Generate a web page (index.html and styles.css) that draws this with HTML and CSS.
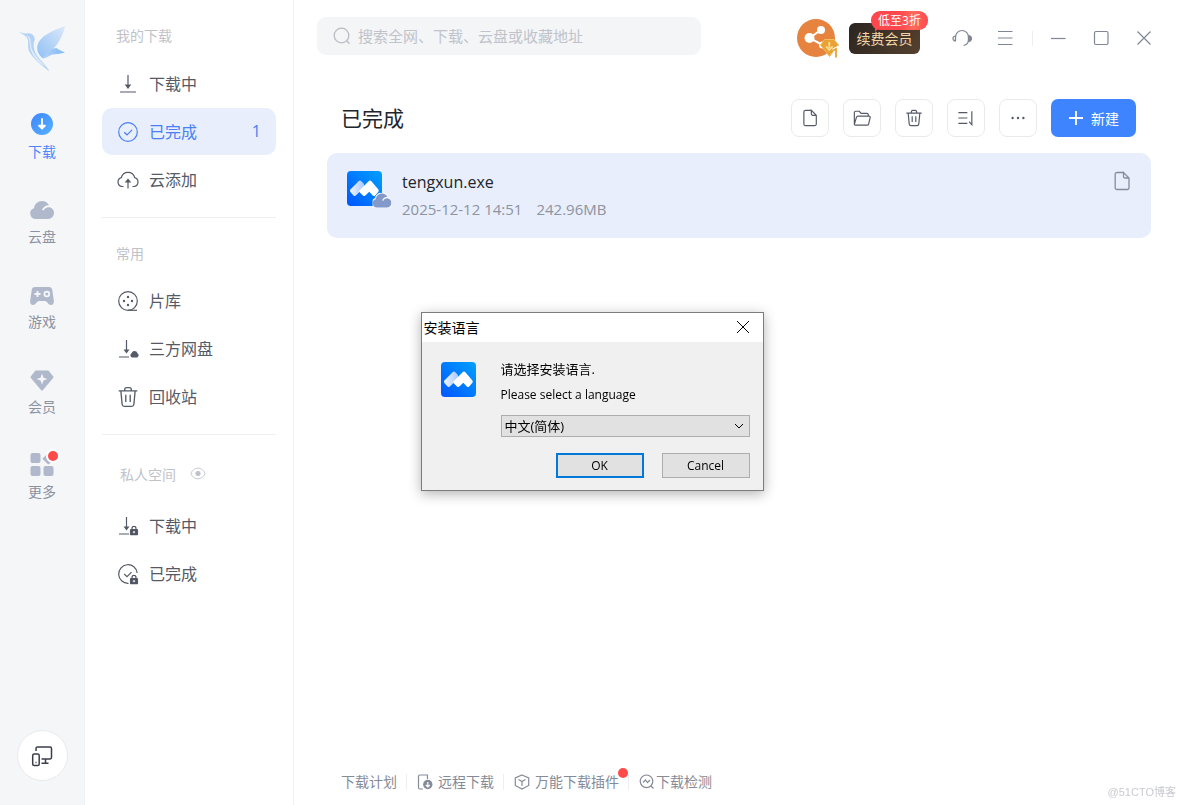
FILE: index.html
```html
<!DOCTYPE html>
<html lang="zh-CN">
<head>
    <meta charset="UTF-8">
    <meta name="viewport" content="width=device-width, initial-scale=1.0">
    <title>已完成</title>
    <link rel="stylesheet" href="styles.css">
</head>
<body>
    <!-- shared icons -->
    <svg class="sprite" aria-hidden="true">
        <defs>
            <linearGradient id="g-app" x1="0" y1="1" x2="1" y2="0">
                <stop offset="0" stop-color="#0056ff"/>
                <stop offset="1" stop-color="#00a0ff"/>
            </linearGradient>
            <linearGradient id="g-peak" x1="0" y1="0" x2="1" y2="0">
                <stop offset="0" stop-color="#f0f5ff"/>
                <stop offset="1" stop-color="#a9c9ff"/>
            </linearGradient>
        </defs>
        <symbol id="i-app" viewBox="0 0 35 35">
            <rect width="35" height="35" rx="4" fill="url(#g-app)"/>
            <path d="M3.4 18.6 11.6 10.2Q13 9 14.3 10.2L17 13V16.500L8.900 24.6Q7.6 25.6 6.5 24.4L3.4 21Q2.6 19.8 3.4 18.6z" fill="url(#g-peak)"/>
            <path d="M12.6 19.2 21.6 10.2Q23 9 24.4 10.2L31.4 18.4Q32.2 19.6 31.4 20.8L28.2 24.4Q27 25.4 25.8 24.4L22.3 20.8 18.4 24.6Q17.2 25.5 16 24.4L12.6 21.2Q11.8 20.2 12.6 19.2z" fill="#fff"/>
        </symbol>
        <symbol id="i-cloud" viewBox="0 0 24 20">
            <path d="M6 19A5.5 5.5 0 0 1 4 8.300C4.500 4 8 1 12 1c3 0 5.500 1.600 7 4.200-3-.3-5.700 1.600-7 4.600l1.500.8c1.200-2.400 3.400-3.700 6-3.300 2.600.5 4.500 2.800 4.500 5.600A6 6 0 0 1 18 19z"/>
        </symbol>
        <symbol id="i-doc" viewBox="0 0 20 20">
            <path d="M11.500 1.500H5A1.800 1.800 0 0 0 3.200 3.300v13.400A1.800 1.800 0 0 0 5 18.500h10.200a1.800 1.800 0 0 0 1.800-1.800V7L11.500 1.500V5.500A1.500 1.500 0 0 0 13 7h4"/>
        </symbol>
        <symbol id="i-trash" viewBox="0 0 20 20">
            <path d="M1.500 4.500h17M3.500 4.500l1.200 12.300a2 2 0 0 0 2 1.700h6.600a2 2 0 0 0 2-1.700l1.200-12.300M7 4.500V3.300A1.800 1.800 0 0 1 8.800 1.500h2.400A1.800 1.800 0 0 1 13 3.300v1.200M8 8v6.500M12 8v6.500"/>
        </symbol>
        <symbol id="i-check" viewBox="0 0 22 22">
            <circle cx="11" cy="11" r="9.300"/>
            <path d="M7.200 11.200l2.800 2.600 5-5"/>
        </symbol>
        <symbol id="i-lock" viewBox="0 0 10 11">
            <path d="M2.800 5V3.200a2.200 2.200 0 0 1 4.400 0V5" fill="none" stroke="#4d5260" stroke-width="1.300"/>
            <rect x="1" y="4.300" width="8" height="6.200" rx=".8" fill="#4d5260"/>
            <path d="M5 6v2.600M3.700 7.300h2.600" stroke="#fff" stroke-width="1"/>
        </symbol>
    </svg>

    <div class="app">
        <nav class="rail">
            <svg class="logo" viewBox="0 0 48 48" aria-hidden="true">
                <defs>
                    <linearGradient id="g-wing" x1="0" y1="1" x2="1" y2="0">
                        <stop offset="0" stop-color="#8fc0f5"/>
                        <stop offset="1" stop-color="#dde8f9"/>
                    </linearGradient>
                    <linearGradient id="g-tail" x1="0" y1="0" x2="1" y2="0">
                        <stop offset="0" stop-color="#b4d3f7"/>
                        <stop offset="1" stop-color="#7db8f5"/>
                    </linearGradient>
                </defs>
                <path d="M47 2C34 7 22 12 19.500 21c-1 5 .5 9.500 5.500 13.500C31 29 43 21 47 2z" fill="url(#g-wing)"/>
                <path d="M25 34.500C29 27 35 24 38.500 24c2 1.500 5 3 8.500 4.500-5 1.300-7 1.600-10.500 1.700C33 30 29 34 25 34.500z" fill="url(#g-tail)"/>
                <path d="M1 8c4 1 6 1.500 8 1.500 4-.8 7.500 1.500 7.800 6-2.500 7 .5 14 5.700 20.500 3.500 3.500 6.500 7 9 11.500C25 42 15.500 36 11 27c-1.500-4-.5-8-1-11-.7-3-4-5.500-9-8z" fill="#b3d2f6"/>
                <path d="M8 11c4 1 5 5 5 10 1 8 7 14 15 22-9-5-14-12-15.500-18C11.500 19 12 14 8 11z" fill="#e1edfc"/>
                <path d="M16.500 18c-1 7 2 13 7 18" fill="none" stroke="#edf4fe" stroke-width="1.500"/>
            </svg>

            <a class="rail-item active" href="#">
                <svg viewBox="0 0 24 24">
                    <defs>
                        <linearGradient id="g-dl" x1="0" y1="0" x2="1" y2="1">
                            <stop offset="0" stop-color="#3f85ff"/>
                            <stop offset="1" stop-color="#55b2ff"/>
                        </linearGradient>
                    </defs>
                    <circle cx="12" cy="12" r="11" fill="url(#g-dl)"/>
                    <path d="M12 7v9M9 13.700l3 3 3-3z" fill="#fff" stroke="#fff" stroke-width="1.800" stroke-linecap="round" stroke-linejoin="round"/>
                </svg>
                <span>下载</span>
            </a>
            <a class="rail-item" href="#">
                <svg viewBox="0 -3 24 24"><use href="#i-cloud" width="24" height="20"/></svg>
                <span>云盘</span>
            </a>
            <a class="rail-item" href="#">
                <svg viewBox="0 -2 24 24">
                    <path d="M5 3h14c2 0 3 1 3.300 3l1.500 10.500c.4 3-1 4.500-2.800 4.500-3 0-3.500-4-6-4H9c-2.500 0-3 4-6 4-1.800 0-3.200-1.500-2.800-4.500L1.700 6C2 4 3 3 5 3z"/>
                    <path d="M7.500 7v6M4.500 10h6" stroke="#f5f6f8" stroke-width="1.800"/>
                    <circle cx="16.800" cy="10" r="2.400" fill="none" stroke="#f5f6f8" stroke-width="1.800"/>
                </svg>
                <span>游戏</span>
            </a>
            <a class="rail-item" href="#">
                <svg viewBox="0 -2 24 24">
                    <path d="M5.500 1.500h13L23.300 7.500q.4.700-.2 1.400L12.800 21.300q-.8.800-1.600 0L.9 8.900q-.6-.7-.2-1.400z"/>
                    <path d="M12 4.500l1.500 4.200 4 1.300-4 1.500L12 15.500l-1.500-4-4-1.500 4-1.300z" fill="#f5f6f8"/>
                </svg>
                <span>会员</span>
            </a>
            <a class="rail-item" href="#">
                <svg viewBox="0 0 24 24">
                    <rect x=".5" y="1" width="10" height="10" rx="2"/>
                    <rect x=".5" y="14" width="10" height="10" rx="2"/>
                    <rect x="13.500" y="14" width="10" height="10" rx="2"/>
                    <rect x="14.300" y="2.500" width="8.500" height="8.500" rx="1" transform="rotate(45 18.500 6.500)"/>
                </svg>
                <i class="dot rail-dot"></i>
                <span>更多</span>
            </a>

            <button class="device-btn" type="button" aria-label="设备">
                <svg viewBox="0 0 22 22">
                    <path d="M5 6V3.500A1.500 1.500 0 0 1 6.500 2H19a1.500 1.500 0 0 1 1.500 1.500v9A1.500 1.500 0 0 1 19 14h-8.500M14.500 14v4M10.500 18.300h7"/>
                    <rect x="1.700" y="9" width="6.500" height="11.500" rx="1.500"/>
                    <path d="M4.500 17.500h1"/>
                </svg>
            </button>
        </nav>

        <aside class="sidebar">
            <h2 class="group-title">我的下载</h2>
            <ul class="menu">
                <li><a class="menu-item" href="#">
                    <svg viewBox="0 0 22 22"><path d="M11 2v11M3 19h16"/><path class="solid" d="M7.700 11.500h6.600L11 16z"/></svg>
                    <span>下载中</span>
                </a></li>
                <li><a class="menu-item active" href="#">
                    <svg><use href="#i-check"/></svg>
                    <span>已完成</span>
                    <b class="count">1</b>
                </a></li>
                <li><a class="menu-item" href="#">
                    <svg viewBox="0 0 22 22"><path d="M6.500 17.500H5A4.500 4.500 0 0 1 4.300 8.700 6.900 6.900 0 0 1 17.700 8.700 4.500 4.500 0 0 1 17 17.500h-1.500M11 19.500v-7"/><path class="solid" d="M7.700 13.500 11 9.500l3.300 4z"/></svg>
                    <span>云添加</span>
                </a></li>
            </ul>

            <h2 class="group-title divided">常用</h2>
            <ul class="menu">
                <li><a class="menu-item" href="#">
                    <svg viewBox="0 0 22 22"><circle cx="11" cy="11" r="9.300"/><path d="M11 20.300h9"/><g class="solid"><circle cx="11" cy="7" r="1.200"/><circle cx="11" cy="15" r="1.200"/><circle cx="7" cy="11" r="1.200"/><circle cx="15" cy="11" r="1.200"/></g></svg>
                    <span>片库</span>
                </a></li>
                <li><a class="menu-item" href="#">
                    <svg viewBox="0 0 22 22"><path d="M9.500 2v10M2 19h10"/><path class="solid" d="M6.500 11.500h6L9.500 15.500z"/><path class="solid" d="M15 19.500a2.400 2.400 0 0 1-.5-4.300 3.200 3.200 0 0 1 6 0 2.400 2.400 0 0 1-.5 4.300z"/></svg>
                    <span>三方网盘</span>
                </a></li>
                <li><a class="menu-item" href="#">
                    <svg><use href="#i-trash"/></svg>
                    <span>回收站</span>
                </a></li>
            </ul>

            <h2 class="group-title divided private">
                <span>私人空间</span>
                <svg viewBox="0 0 18 14"><path d="M1 7c1.500-4 4.500-6 8-6s6.500 2 8 6c-1.500 4-4.500 6-8 6s-6.500-2-8-6z"/><circle cx="9" cy="7" r="2.500" fill="#bfc2c9"/></svg>
            </h2>
            <ul class="menu">
                <li><a class="menu-item" href="#">
                    <svg viewBox="0 0 22 22"><path d="M9.500 2v10M2 19h10"/><path class="solid" d="M6.500 11.500h6L9.500 15.500z"/><use href="#i-lock" x="12.500" y="10.500" width="9" height="10"/></svg>
                    <span>下载中</span>
                </a></li>
                <li><a class="menu-item" href="#">
                    <svg viewBox="0 0 22 22"><path d="M11.500 20.300A9.300 9.300 0 1 1 20.200 10M7.200 11l2.800 2.600 4.500-4.500"/><use href="#i-lock" x="12.500" y="11.500" width="9" height="10"/></svg>
                    <span>已完成</span>
                </a></li>
            </ul>
        </aside>

        <main class="main">
            <header class="topbar">
                <label class="search">
                    <svg viewBox="0 0 18 18"><circle cx="8.500" cy="8.500" r="7.300"/><path d="M13.800 13.800l2.700 3"/></svg>
                    <input type="text" aria-label="搜索" placeholder="搜索全网、下载、云盘或收藏地址">
                </label>

                <div class="top-actions">
                    <button class="avatar" type="button" aria-label="账号">
                        <svg viewBox="0 0 44 40">
                            <circle cx="19" cy="19" r="19" fill="#e5833f"/>
                            <path d="M24 11 12.500 19 25.500 26" fill="none" stroke="#fff" stroke-width="2"/>
                            <circle cx="24" cy="11" r="4" fill="#fff"/>
                            <circle cx="12.500" cy="19" r="5" fill="#fff"/>
                            <circle cx="25.500" cy="26" r="3.500" fill="#fff"/>
                            <path d="M27.500 20.500h9.500l4.500 5.500-9 11.500-9-11.500z" fill="#e9a235" stroke="#f3bd5c"/>
                            <path d="M32.300 23v6M29 27.500l3.300 3.500 3.300-3.500" fill="none" stroke="#fbdc94" stroke-width="1.800"/>
                            <path d="M36 31.500l3-1.500V38.500" fill="none" stroke="#fff" stroke-width="4"/>
                            <path d="M36 31.500l3-1.500V38.500" fill="none" stroke="#e9a235" stroke-width="1.800"/>
                        </svg>
                    </button>
                    <button class="vip" type="button">续费会员<span class="vip-tag">低至3折</span></button>
                    <button class="win-btn" type="button" aria-label="客服">
                        <svg viewBox="0 0 20 20"><path d="M3.500 12V9a6.500 6.500 0 0 1 13 0V12q0 4.500-5 5.500"/><path d="M3.500 8A2.500 2.500 0 0 0 3.500 13z"/><path d="M16.500 7.500A2.800 2.800 0 0 1 16.500 13.500z" fill="#7f8694"/></svg>
                    </button>
                    <button class="win-btn" type="button" aria-label="菜单">
                        <svg viewBox="0 0 20 20"><path d="M3 3.500h14.500M3 10h14.500M3 16.500h14.500"/></svg>
                    </button>
                    <span class="bar"></span>
                    <button class="win-btn" type="button" aria-label="最小化">
                        <svg viewBox="0 0 20 20"><path d="M3 10.500h14.500"/></svg>
                    </button>
                    <button class="win-btn" type="button" aria-label="最大化">
                        <svg viewBox="0 0 20 20"><rect x="3.500" y="3.500" width="13.500" height="13" rx="1.500"/></svg>
                    </button>
                    <button class="win-btn" type="button" aria-label="关闭">
                        <svg viewBox="0 0 20 20"><path d="M3.500 3.500l13 13M16.500 3.500l-13 13"/></svg>
                    </button>
                </div>
            </header>

            <div class="toolbar">
                <h1>已完成</h1>
                <button class="tool" type="button" aria-label="文件"><svg><use href="#i-doc"/></svg></button>
                <button class="tool" type="button" aria-label="文件夹">
                    <svg viewBox="0 0 20 20"><path d="M1.500 17V4A1.500 1.500 0 0 1 3 2.500h4l2 2.300h6.500A1.500 1.500 0 0 1 17 6.300V8M1.500 17 3.800 9.300A1.800 1.800 0 0 1 5.500 8h12.300a1.300 1.300 0 0 1 1.300 1.600l-1.700 7A1.500 1.500 0 0 1 16 18H3A1.500 1.500 0 0 1 1.500 17z"/></svg>
                </button>
                <button class="tool" type="button" aria-label="删除"><svg><use href="#i-trash"/></svg></button>
                <button class="tool" type="button" aria-label="排序">
                    <svg viewBox="0 0 20 20"><path d="M1.500 4h10M1.500 10h10M1.500 16h10M16.500 2.500V17.500l-3-3.500"/></svg>
                </button>
                <button class="tool" type="button" aria-label="更多操作">
                    <svg viewBox="0 0 20 20"><g class="dots"><circle cx="4" cy="10" r="1.300"/><circle cx="10" cy="10" r="1.300"/><circle cx="16" cy="10" r="1.300"/></g></svg>
                </button>
                <button class="new-btn" type="button">
                    <svg viewBox="0 0 16 16"><path d="M8 1v14M1 8h14"/></svg>新建
                </button>
            </div>

            <article class="file">
                <div class="file-icon">
                    <svg class="file-app"><use href="#i-app"/></svg>
                    <svg class="file-cloud" viewBox="-2 -2 28 24"><use href="#i-cloud" width="24" height="20"/></svg>
                </div>
                <div class="file-info">
                    <p class="file-name">tengxun.exe</p>
                    <p class="file-meta"><span>2025-12-12 14:51</span><span>242.96MB</span></p>
                </div>
                <button class="file-open" type="button" aria-label="打开文件"><svg><use href="#i-doc"/></svg></button>
            </article>

            <footer class="footer">
                <a href="#">下载计划</a>
                <a href="#">
                    <svg viewBox="0 0 16 16"><path d="M6 15H3a1.500 1.500 0 0 1-1.500-1.500v-11A1.500 1.500 0 0 1 3 1h7.500v4"/><circle cx="10.800" cy="10.500" r="4.700" fill="#858b97" stroke="none"/><path d="M10.800 8v4.500M8.800 11l2 2 2-2" stroke="#fff"/></svg>
                    远程下载
                </a>
                <a href="#">
                    <svg viewBox="0 0 16 16"><path d="M8 1l6.700 3v7.500L8 15l-6.700-3.500V4zM4.500 5.500 8 7.500l3.500-2M8 7.500V12"/></svg>
                    万能下载插件
                    <i class="dot footer-dot"></i>
                </a>
                <a class="tight" href="#">
                    <svg viewBox="0 0 16 16"><circle cx="7.500" cy="7.300" r="6.300"/><path d="M4 8.500l2.500-2.500 2 2.500 2.500-2.500M12 12l2.500 2.500"/></svg>
                    下载检测
                </a>
            </footer>
        </main>
    </div>

    <div class="overlay">
        <section class="dialog" role="dialog" aria-labelledby="dlg-title">
            <header class="dialog-head">
                <h2 id="dlg-title">安装语言</h2>
                <button type="button" aria-label="Close">
                    <svg viewBox="0 0 14 14"><path d="M1 1l12 12M13 1 1 13"/></svg>
                </button>
            </header>
            <form class="dialog-body">
                <svg class="dialog-icon"><use href="#i-app"/></svg>
                <div class="dialog-form">
                    <label for="lang"><span class="zh">请选择安装语言.</span><span>Please select a language</span></label>
                    <div class="select">
                        <select id="lang">
                            <option>中文(简体)</option>
                            <option>English</option>
                        </select>
                        <svg viewBox="0 0 10 6"><path d="M1 1l4 4 4-4"/></svg>
                    </div>
                    <div class="dialog-buttons">
                        <button class="primary" type="button">OK</button>
                        <button type="button">Cancel</button>
                    </div>
                </div>
            </form>
        </section>
    </div>

    <span class="watermark">@51CTO博客</span>
</body>
</html>
```
FILE: styles.css
```css
* {
    box-sizing: border-box;
}

body {
    margin: 0;
    font-family: 'Open Sans', 'Noto Sans CJK SC', sans-serif;
    font-size: 14px;
    color: #555a66;
    background: #fff;
}

h1, h2, p, ul {
    margin: 0;
    padding: 0;
    font-weight: 400;
}

ul {
    list-style: none;
}

a {
    color: inherit;
    text-decoration: none;
}

button {
    padding: 0;
    border: 0;
    background: none;
    font: inherit;
    color: inherit;
}

svg {
    display: block;
    flex: none;
    fill: none;
    stroke: currentColor;
}

.sprite {
    position: absolute;
    width: 0;
    height: 0;
}

.app {
    display: flex;
    min-height: 100vh;
}

.dot {
    position: absolute;
    width: 10px;
    height: 10px;
    border-radius: 50%;
    background: #ff4a4a;
}

/* left rail */
.rail {
    display: flex;
    flex-direction: column;
    align-items: center;
    gap: 35px;
    width: 85px;
    flex: none;
    padding: 24px 0;
    background: #f5f6f8;
    border-right: 1px solid #eff1f4;
}

.logo {
    width: 48px;
    height: 48px;
    margin-bottom: 5px;
    stroke: none;
}

.rail-item {
    position: relative;
    display: flex;
    flex-direction: column;
    align-items: center;
    gap: 6px;
    line-height: 20px;
    color: #8b92a2;
}

.rail-item svg {
    width: 24px;
    height: 24px;
    fill: #b0b8cb;
    stroke: none;
}

.rail-item.active {
    color: #4a86ff;
}

.rail-dot {
    top: -1px;
    right: -2px;
    box-shadow: 0 0 0 2px #fff;
}

.device-btn {
    display: flex;
    align-items: center;
    justify-content: center;
    width: 51px;
    height: 51px;
    margin-top: auto;
    border: 1px solid #e8eaee;
    border-radius: 50%;
    background: #fff;
    color: #3b3f4c;
}

.device-btn svg {
    width: 22px;
    height: 22px;
    stroke-width: 1.5;
}

/* sidebar */
.sidebar {
    width: 209px;
    flex: none;
    padding: 0 17px;
    border-right: 1px solid #f1f2f4;
}

.group-title {
    display: flex;
    align-items: center;
    gap: 14px;
    height: 60px;
    padding: 10px 14px 0;
    font-size: 14px;
    color: #bfc2c9;
}

.group-title.divided {
    margin-top: 14px;
    border-top: 1px solid #eeeff1;
}

.group-title.private {
    height: 68px;
    padding-left: 18px;
}

.group-title svg {
    width: 16px;
    height: 13px;
}

.menu {
    display: flex;
    flex-direction: column;
    gap: 1px;
}

.menu-item {
    display: flex;
    align-items: center;
    gap: 10px;
    height: 47px;
    padding: 0 15px;
    border-radius: 10px;
    font-size: 16px;
}

.menu-item span,
.menu-item b {
    padding-bottom: 2px;
}

.menu-item svg {
    width: 22px;
    height: 22px;
    stroke-width: 1.2;
}

.menu-item .solid {
    fill: currentColor;
    stroke: none;
}

.menu-item.active {
    background: #e8eefb;
    color: #4a80f5;
}

.count {
    margin-left: auto;
    font-weight: 400;
}

/* main area */
.main {
    display: flex;
    flex-direction: column;
    flex: 1;
    min-width: 0;
}

.topbar {
    display: flex;
    justify-content: space-between;
    align-items: flex-start;
    height: 76px;
    padding: 17px 30px 0 23px;
}

.search {
    display: flex;
    align-items: center;
    gap: 7px;
    width: 384px;
    height: 38px;
    padding: 0 16px;
    border-radius: 9px;
    background: #f4f5f7;
    color: #b9bcc3;
}

.search svg {
    width: 18px;
    height: 18px;
    stroke-width: 1.3;
}

.search input {
    flex: 1;
    min-width: 0;
    padding: 0;
    border: 0;
    outline: 0;
    background: none;
    font: inherit;
    font-size: 15px;
}

.search input::placeholder {
    color: #c0c3ca;
}

.top-actions {
    display: flex;
    align-items: center;
    gap: 23px;
    padding-top: 2px;
}

.avatar {
    width: 38px;
    height: 38px;
    margin-right: -9px;
}

.avatar svg {
    width: 44px;
    height: 40px;
    stroke: none;
}

.vip {
    position: relative;
    width: 71px;
    height: 31px;
    margin-right: 9px;
    border-radius: 6px;
    background: linear-gradient(120deg, #2b2520, #55412f);
    color: #f3d5a7;
}

.vip-tag {
    position: absolute;
    top: -12px;
    right: -8px;
    width: 57px;
    border-radius: 9px;
    background: linear-gradient(90deg, #ff484d 50%, #ff6a5c 75%, #ff484d);
    font-size: 12px;
    line-height: 19px;
    color: #fff;
}

/* speech-bubble tail of the tag */
.vip-tag::after {
    content: '';
    position: absolute;
    left: 4px;
    top: 17px;
    border-left: 4px solid #ff484d;
    border-right: 4px solid transparent;
    border-bottom: 4px solid transparent;
}

.win-btn svg {
    width: 20px;
    height: 20px;
    color: #7f8694;
    stroke-width: 1.2;
}

.bar {
    width: 1px;
    height: 15px;
    margin: 0 -8px 0 -6px;
    background: #eceef1;
}

.toolbar {
    display: flex;
    align-items: center;
    gap: 14px;
    padding: 23px 48px 16px 47px;
}

.toolbar h1 {
    margin-right: auto;
    font-size: 21px;
    line-height: 28px;
    color: #22252b;
}

.tool {
    display: flex;
    align-items: center;
    justify-content: center;
    width: 38px;
    height: 38px;
    border: 1px solid #e9eaed;
    border-radius: 8px;
}

.tool svg {
    width: 18px;
    height: 18px;
    stroke-width: 1.3;
}

.tool .dots {
    fill: currentColor;
    stroke: none;
}

.new-btn {
    display: flex;
    align-items: center;
    justify-content: center;
    gap: 7px;
    width: 85px;
    height: 38px;
    border-radius: 7px;
    background: #3f84ff;
    color: #fff;
}

.new-btn svg {
    width: 16px;
    height: 16px;
    stroke-width: 1.8;
}

.file {
    display: flex;
    align-items: flex-start;
    margin: 0 33px;
    padding: 18px 19px 17px 20px;
    border-radius: 10px;
    background: #e8eefb;
}

.file-icon {
    position: relative;
    margin-right: 20px;
}

.file-app {
    width: 35px;
    height: 35px;
    stroke: none;
}

.file-cloud {
    position: absolute;
    left: 24px;
    top: 20px;
    width: 22px;
    height: 19px;
    fill: #8299c9;
    stroke: #f2f6fe;
    stroke-width: 3;
    paint-order: stroke;
}

.file-info {
    flex: 1;
}

.file-name {
    font-size: 16px;
    line-height: 23px;
    color: #22252b;
}

.file-meta {
    display: flex;
    gap: 14px;
    padding-top: 4px;
    font-size: 15px;
    line-height: 23px;
    color: #8d93a1;
}

.file-open svg {
    width: 20px;
    height: 20px;
    color: #858c9b;
    stroke-width: 1.3;
}

.footer {
    display: flex;
    align-items: center;
    height: 46px;
    margin-top: auto;
    padding-left: 36px;
    color: #858b97;
}

.footer a {
    position: relative;
    display: flex;
    align-items: center;
    gap: 5px;
    padding: 0 9px 0 10px;
    line-height: 16px;
}

.footer a:first-child {
    padding-left: 11px;
}

.footer a + a {
    border-left: 1px solid #eceef1;
}

.footer a.tight {
    gap: 1px;
}

.footer svg {
    width: 16px;
    height: 16px;
    stroke-width: 1.2;
}

.footer-dot {
    top: -6px;
    right: 0;
}

/* language dialog */
.overlay {
    position: fixed;
    inset: 0;
    display: flex;
    align-items: center;
    justify-content: center;
    padding-bottom: 2px;
}

.dialog {
    width: 343px;
    border: 1px solid #7c7c7c;
    background: #f0f0f0;
    box-shadow: 0 3px 12px rgba(0, 0, 0, 0.3);
    font-family: 'Open Sans', 'Noto Sans CJK SC', sans-serif;
    font-size: 12px;
    color: #000;
}

.dialog-head {
    display: flex;
    align-items: center;
    justify-content: space-between;
    height: 29px;
    padding: 0 13px 2px 2px;
    background: #fff;
}

.dialog-head h2 {
    font-size: 14px;
}

.dialog-head svg {
    width: 14px;
    height: 14px;
}

.dialog-body {
    display: flex;
    gap: 25px;
    padding: 14px 13px 12px 19px;
}

.dialog-icon {
    width: 35px;
    height: 35px;
    margin-top: 6px;
    stroke: none;
}

.dialog-form {
    flex: 1;
}

.dialog-form label span {
    display: block;
    line-height: 26px;
}

.dialog-form label .zh {
    font-size: 13px;
}

.select {
    position: relative;
    margin: 7px 0 16px;
}

.select select {
    display: block;
    width: 100%;
    height: 22px;
    padding: 0 3px;
    border: 1px solid #adadad;
    border-radius: 0;
    background: #e1e1e1;
    font: inherit;
    font-size: 13px;
    line-height: 18px;
    color: #000;
    appearance: none;
}

.select svg {
    position: absolute;
    top: 8px;
    right: 6px;
    width: 10px;
    height: 6px;
    pointer-events: none;
}

.dialog-buttons {
    display: flex;
    justify-content: flex-end;
    gap: 18px;
}

.dialog-buttons button {
    width: 88px;
    height: 25px;
    border: 1px solid #adadad;
    background: #e1e1e1;
}

.dialog-buttons .primary {
    border: 2px solid #0078d7;
}

.watermark {
    position: fixed;
    right: 8px;
    bottom: 6px;
    font-family: 'Liberation Sans', 'Noto Sans CJK SC', sans-serif;
    font-size: 11px;
    color: #c9cbcf;
}
```
